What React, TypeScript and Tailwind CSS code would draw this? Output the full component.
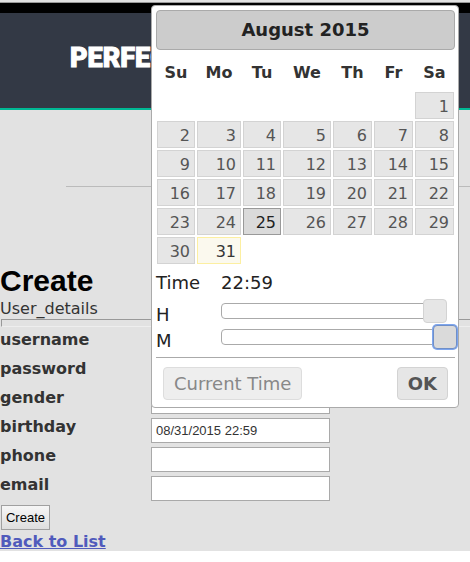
import React, { useState } from "react";

const DAYS = ["Su", "Mo", "Tu", "We", "Th", "Fr", "Sa"];

const WEEKS: (number | null)[][] = [
  [null, null, null, null, null, null, 1],
  [2, 3, 4, 5, 6, 7, 8],
  [9, 10, 11, 12, 13, 14, 15],
  [16, 17, 18, 19, 20, 21, 22],
  [23, 24, 25, 26, 27, 28, 29],
  [30, 31, null, null, null, null, null],
];

const SELECTED = 25;
const TODAY = 31;

const FIELDS = ["username", "password", "gender", "birthday", "phone", "email"];

function dayStyle(day: number) {
  if (day === SELECTED) return "border-[#999999] bg-[#dadada] text-[#212121]";
  if (day === TODAY) return "border-[#fcefa1] bg-[#fbf9ee] text-[#363636]";
  return "border-[#d3d3d3] bg-[#e6e6e6] text-[#555555]";
}

type TimeSliderProps = {
  id: string;
  label: string;
  max: number;
  value: number;
  focused?: boolean;
  onChange: (value: number) => void;
};

function TimeSlider({ id, label, max, value, focused, onChange }: TimeSliderProps) {
  return (
    <div className="flex h-[26px] items-start">
      <label htmlFor={id} className="w-[65px] leading-7">
        {label}
      </label>
      <div className="relative mt-[2px] mr-[9px] h-4 flex-1 rounded-[4px] border border-[#aaaaaa] bg-white">
        <input
          id={id}
          type="range"
          min={0}
          max={max}
          value={value}
          onChange={(e) => onChange(Number(e.target.value))}
          className={
            "absolute -inset-x-3 -top-[5px] h-6 appearance-none bg-transparent outline-none [&::-webkit-slider-thumb]:size-6 [&::-webkit-slider-thumb]:appearance-none [&::-webkit-slider-thumb]:rounded-[4px] [&::-webkit-slider-thumb]:border " +
            (focused
              ? "[&::-webkit-slider-thumb]:border-[#6f8fc8] [&::-webkit-slider-thumb]:bg-[#dadada] [&::-webkit-slider-thumb]:shadow-[0_0_0_1px_#7ea6ee]"
              : "[&::-webkit-slider-thumb]:border-[#d3d3d3] [&::-webkit-slider-thumb]:bg-[#e6e6e6]")
          }
        />
      </div>
    </div>
  );
}

function DateTimePicker() {
  const [hour, setHour] = useState(22);
  const [minute, setMinute] = useState(59);

  return (
    <div className="absolute top-[5px] left-[151px] w-[308px] rounded-[4px] border border-[#aaaaaa] bg-white py-1 pr-[3px] pl-1 text-lg text-[#222222]">
      <div className="flex h-10 items-center justify-center rounded-[4px] border border-[#aaaaaa] bg-[#cccccc] font-bold">
        August 2015
      </div>
      <table className="mt-[5px] w-full table-fixed border-separate border-spacing-0 text-base leading-5">
        <colgroup>
          <col className="w-10" />
          <col className="w-[46px]" />
          <col className="w-10" />
          <col className="w-[50px]" />
          <col className="w-[41px]" />
          <col className="w-[41px]" />
          <col />
        </colgroup>
        <thead>
          <tr className="h-9 text-[#333333]">
            {DAYS.map((day) => (
              <th key={day} className="p-0 text-center font-bold">
                {day}
              </th>
            ))}
          </tr>
        </thead>
        <tbody>
          {WEEKS.map((week, w) => (
            <tr key={w} className="h-[29px]">
              {week.map((day, d) => (
                <td key={d} className="p-px">
                  {day !== null && (
                    <button
                      type="button"
                      className={"block h-[27px] w-full border pt-[2px] pr-1 text-right " + dayStyle(day)}
                    >
                      {day}
                    </button>
                  )}
                </td>
              ))}
            </tr>
          ))}
        </tbody>
      </table>
      <div className="flex h-9 items-center">
        <span className="w-[65px]">Time</span>
        <span>
          {hour}:{minute}
        </span>
      </div>
      <TimeSlider id="hour" label="H" max={23} value={hour} onChange={setHour} />
      <TimeSlider id="minute" label="M" max={59} value={minute} focused onChange={setMinute} />
      <div className="mt-1 flex justify-between border-t border-[#aaaaaa] px-[7px] pt-[9px] pb-[3px]">
        <button
          type="button"
          className="h-[33px] rounded-[4px] border border-[#dddddd] bg-[#eeeeee] px-[10px] text-[#888888]"
        >
          Current Time
        </button>
        <button
          type="button"
          className="h-[33px] rounded-[4px] border border-[#d3d3d3] bg-[#e6e6e6] px-[10px] font-bold text-[#555555]"
        >
          OK
        </button>
      </div>
    </div>
  );
}

export default function App() {
  const [birthday, setBirthday] = useState("08/31/2015 22:59");

  return (
    <div className="relative bg-white font-['DejaVu_Sans',Verdana,sans-serif] text-base text-[#333333]">
      <div className="h-[3px] border-b border-[#999999] bg-[#e2e2e2]" />
      <header className="h-[107px] border-t-10 border-b-2 border-t-black border-b-[#00b894] bg-[#333945] pt-[27px] pl-[70px]">
        <div className="font-[Roboto,sans-serif] text-[27px] leading-9 font-black text-white [-webkit-text-stroke:1px_white]">
          PERFEC
        </div>
      </header>
      <main className="bg-[#e2e2e2] pt-[76px]">
        <hr className="ml-[66px] border-[#bbbbbb]" />
        <h1 className="pt-[76px] font-['Liberation_Sans',Arial,sans-serif] text-[30px] leading-9 font-bold text-black">
          Create
        </h1>
        <p className="leading-5">User_details</p>
        <div className="ml-px h-2 border-t border-b border-l border-t-[#999999] border-b-[#eeeeee] border-l-[#999999]" />
        <form onSubmit={(e) => e.preventDefault()}>
          {FIELDS.map((field) => (
            <div key={field} className="flex h-[29px] items-start">
              <label htmlFor={field} className="w-[151px] pt-px leading-6 font-bold">
                {field}
              </label>
              <input
                id={field}
                type={field === "password" ? "password" : "text"}
                value={field === "birthday" ? birthday : undefined}
                onChange={field === "birthday" ? (e) => setBirthday(e.target.value) : undefined}
                className="mt-1 h-[25px] w-[179px] border border-[#a9a9a9] bg-white px-1 font-['Liberation_Sans',Arial,sans-serif] text-[13px] text-[#333333] outline-none"
              />
            </div>
          ))}
          <button
            type="submit"
            className="mt-1 ml-px block h-[25px] w-[49px] border border-[#a0a0a0] bg-linear-to-b from-[#f6f6f6] to-[#dedede] font-['Liberation_Sans',Arial,sans-serif] text-[13px] text-black"
          >
            Create
          </button>
        </form>
        <a href="#list" className="mt-[3px] block w-fit leading-[18px] font-bold text-[#505abc] underline">
          Back to List
        </a>
      </main>
      <DateTimePicker />
    </div>
  );
}
